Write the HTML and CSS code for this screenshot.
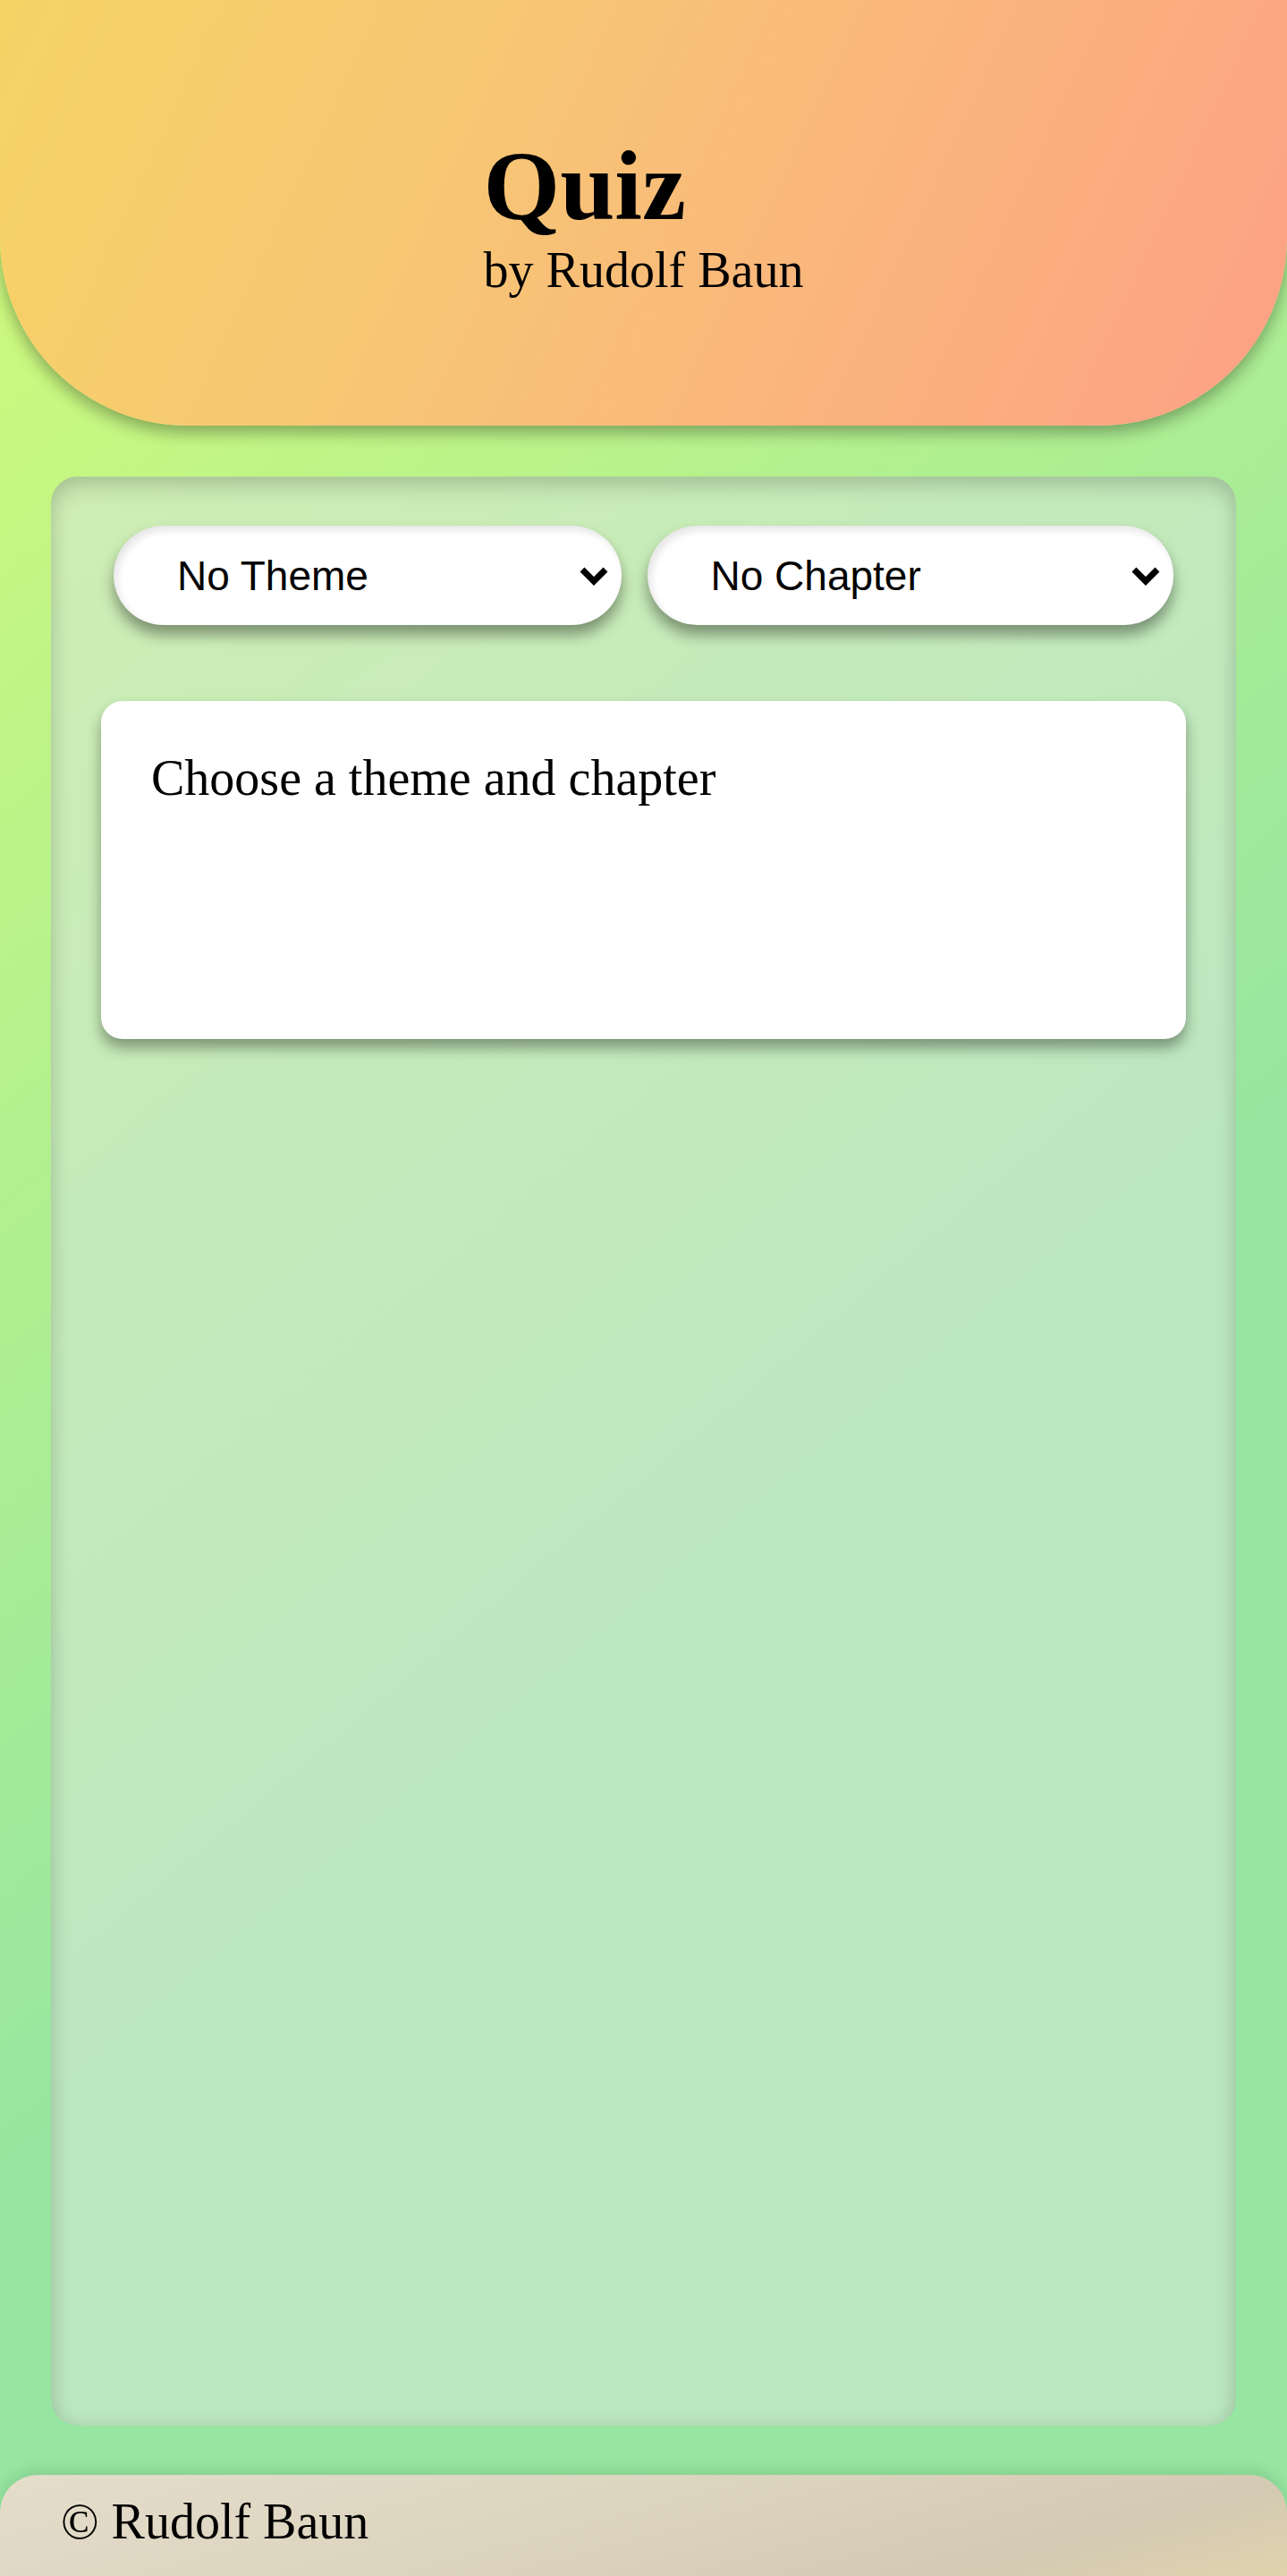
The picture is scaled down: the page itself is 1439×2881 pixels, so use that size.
FILE: index.html
```html
<!DOCTYPE html>
<html lang="en">
<head>
<meta charset="utf-8">
<title>Quiz</title>
<link rel="stylesheet" href="styles.css">
</head>
<body>
<header class="site-header">
  <div class="brand">
    <h1 class="brand-title">Quiz</h1>
    <p class="brand-sub">by Rudolf Baun</p>
  </div>
</header>
<main class="panel">
  <div class="filters">
    <div class="select-wrap">
      <select class="pill-select" aria-label="Theme">
        <option>No Theme</option>
      </select>
      <svg class="chevron" viewBox="0 0 34 22" aria-hidden="true"><polyline points="4,4 17,17 30,4" fill="none" stroke="#000" stroke-width="7" stroke-linejoin="miter"/></svg>
    </div>
    <div class="select-wrap">
      <select class="pill-select" aria-label="Chapter">
        <option>No Chapter</option>
      </select>
      <svg class="chevron" viewBox="0 0 34 22" aria-hidden="true"><polyline points="4,4 17,17 30,4" fill="none" stroke="#000" stroke-width="7" stroke-linejoin="miter"/></svg>
    </div>
  </div>
  <section class="question-card">
    <p class="question-text">Choose a theme and chapter</p>
  </section>
</main>
<footer class="site-footer">
  <p class="copyright">© Rudolf Baun</p>
</footer>
</body>
</html>
```
FILE: styles.css
```css
html, body {
  margin: 0;
  padding: 0;
}

body {
  min-height: 100vh;
  display: flex;
  flex-direction: column;
  font-family: "Liberation Serif", "Times New Roman", serif;
  color: #000;
  background: linear-gradient(140deg, #d4fc79 0%, #96e6a1 60%);
}

.site-header {
  height: 476px;
  box-sizing: border-box;
  padding-top: 146px;
  display: flex;
  justify-content: center;
  align-items: flex-start;
  background: linear-gradient(115deg, #f6d365 0%, #f7c774 35%, #fda085 100%);
  border-radius: 0 0 210px 210px;
  box-shadow: 0 8px 18px rgba(0, 0, 0, 0.32);
  position: relative;
  z-index: 1;
}

.brand {
  display: flex;
  flex-direction: column;
  align-items: flex-start;
}

.brand-title {
  margin: 0;
  font-size: 110px;
  font-weight: bold;
  line-height: 124px;
}

.brand-sub {
  margin: 0;
  font-size: 56px;
  line-height: normal;
}

.panel {
  flex: 1;
  margin: 57px 57px 55px;
  padding: 55px 56px;
  border-radius: 30px;
  background: rgba(212, 232, 212, 0.62);
  box-shadow: inset 0 12px 24px rgba(0, 0, 0, 0.14), inset 0 0 22px rgba(0, 0, 0, 0.08);
  display: flex;
  flex-direction: column;
}

.filters {
  display: flex;
  gap: 29px;
  padding: 0 14px;
}

.select-wrap {
  flex: 1 1 auto;
  position: relative;
  display: flex;
}

.pill-select {
  -webkit-appearance: none;
  appearance: none;
  width: 100%;
  height: 111px;
  margin: 0;
  border: none;
  outline: none;
  border-radius: 56px;
  background: #fff;
  color: #000;
  font-family: "Liberation Sans", Arial, sans-serif;
  font-size: 46px;
  padding: 0 60px 0 71px;
  box-shadow: 0 11px 16px rgba(0, 0, 0, 0.38), inset 4px 5px 9px rgba(0, 0, 0, 0.1);
}

.chevron {
  position: absolute;
  right: 14px;
  top: 45px;
  width: 34px;
  height: 22px;
  pointer-events: none;
}

.question-card {
  margin-top: 85px;
  height: 378px;
  box-sizing: border-box;
  padding: 54px 56px;
  background: #fff;
  border-radius: 24px;
  box-shadow: 0 10px 16px rgba(0, 0, 0, 0.36);
}

.question-text {
  margin: 0;
  font-size: 56px;
  line-height: normal;
}

.site-footer {
  height: 113px;
  box-sizing: border-box;
  padding: 20px 68px 0;
  border-radius: 42px 42px 0 0;
  background: linear-gradient(165deg, #e4ddca 0%, #ddd4bf 45%, #d4cab3 80%, #e0d3ad 100%);
  box-shadow: 0 -6px 16px rgba(0, 0, 0, 0.1);
}

.copyright {
  margin: 0;
  font-size: 56px;
  line-height: normal;
}
```
